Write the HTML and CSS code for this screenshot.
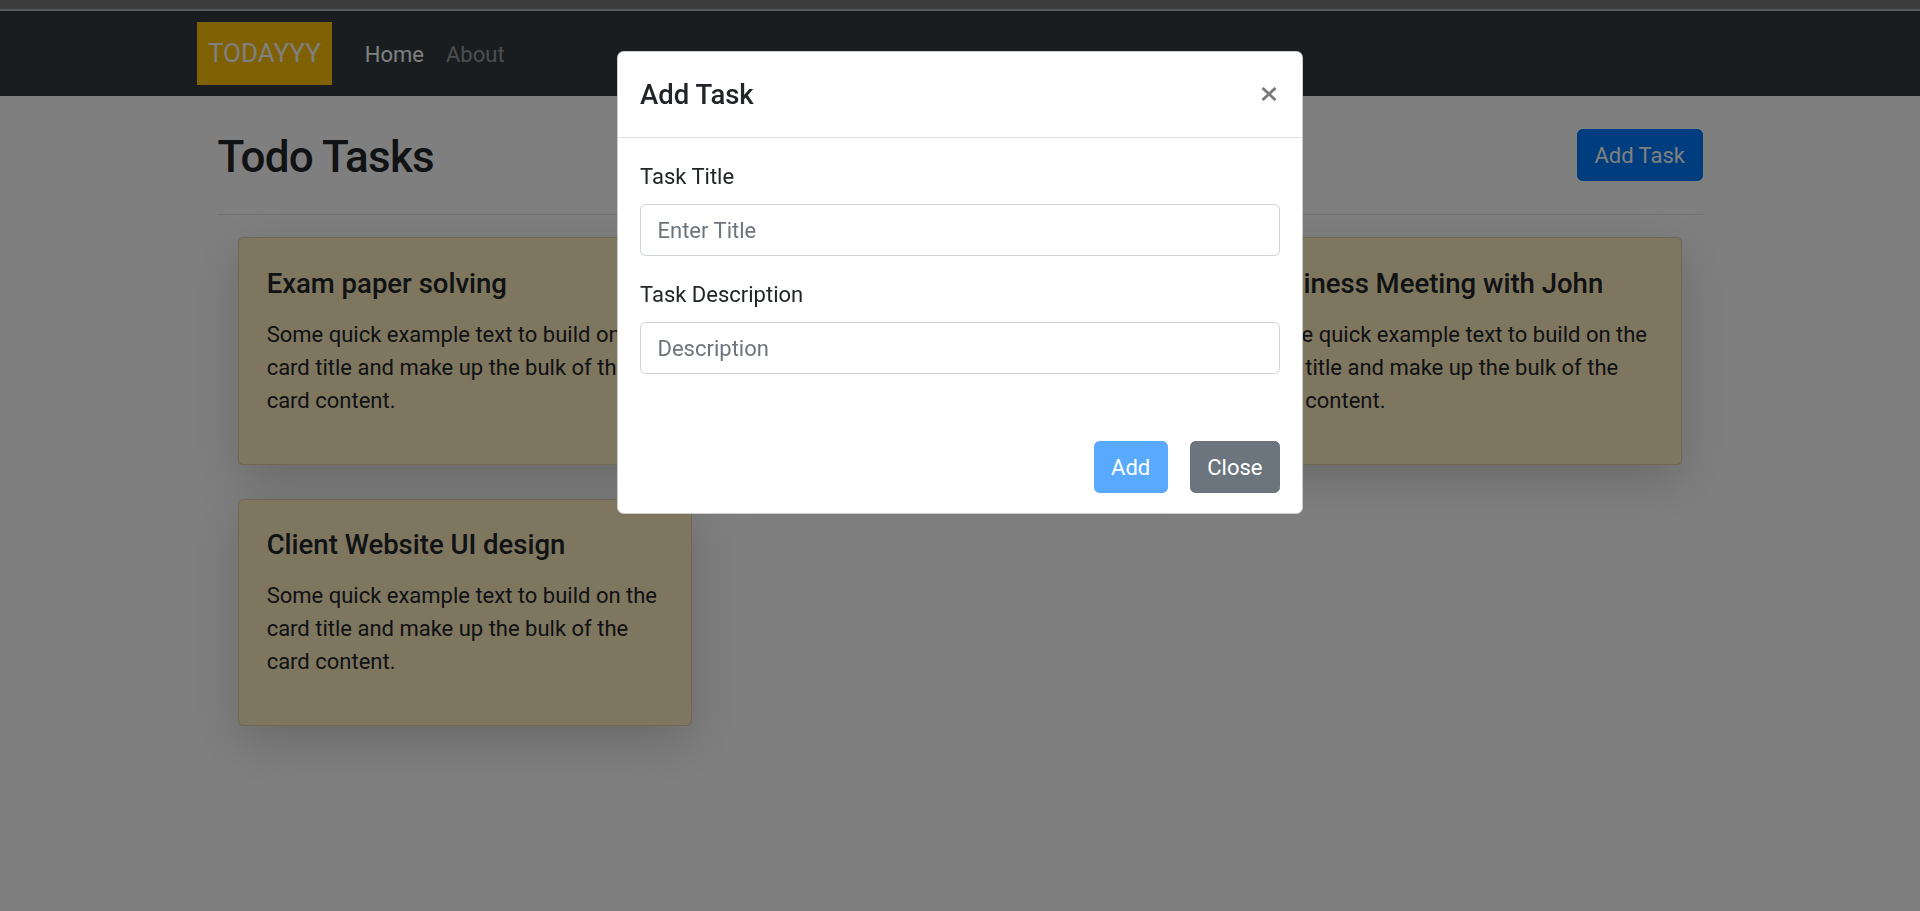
FILE: index.html
```html
<!DOCTYPE html>
<html lang="en">
<head>
<meta charset="utf-8">
<title>TODAYYY - Todo Tasks</title>
<link rel="stylesheet" href="styles.css">
</head>
<body>
<div class="topstrip"></div>
<nav class="navbar">
  <div class="nav-container">
    <a class="brand" href="#">TODAYYY</a>
    <ul class="nav-links">
      <li><a class="nav-link active" href="#">Home</a></li>
      <li><a class="nav-link" href="#">About</a></li>
    </ul>
  </div>
</nav>

<main class="main">
  <div class="page-head">
    <h2 class="page-title">Todo Tasks</h2>
    <button class="btn btn-primary" type="button">Add Task</button>
  </div>
  <hr class="divider">
  <div class="cards">
    <div class="card">
      <h5 class="card-title">Exam paper solving</h5>
      <p class="card-text">Some quick example text to build on the card title and make up the bulk of the card content.</p>
    </div>
    <div class="card">
      <h5 class="card-title">Grocery shopping</h5>
      <p class="card-text">Some quick example text to build on the card title and make up the bulk of the card content.</p>
    </div>
    <div class="card">
      <h5 class="card-title">Business Meeting with John</h5>
      <p class="card-text">Some quick example text to build on the card title and make up the bulk of the card content.</p>
    </div>
    <div class="card">
      <h5 class="card-title">Client Website UI design</h5>
      <p class="card-text">Some quick example text to build on the card title and make up the bulk of the card content.</p>
    </div>
  </div>
</main>

<div class="backdrop"></div>
<div class="modal">
  <div class="modal-dialog">
    <div class="modal-header">
      <h5 class="modal-title">Add Task</h5>
      <button class="close" type="button" aria-label="Close">
        <svg width="16" height="14" viewBox="0 0 16 14" aria-hidden="true">
          <path d="M1.5 1 L14.5 13 M14.5 1 L1.5 13" stroke="#7a7a7a" stroke-width="2.9" fill="none"/>
        </svg>
      </button>
    </div>
    <div class="modal-body">
      <div class="form-group">
        <label class="form-label" for="title">Task Title</label>
        <input class="form-control" id="title" type="text" placeholder="Enter Title">
      </div>
      <div class="form-group">
        <label class="form-label" for="desc">Task Description</label>
        <input class="form-control" id="desc" type="text" placeholder="Description">
      </div>
    </div>
    <div class="modal-footer">
      <button class="btn btn-primary btn-disabled" type="button">Add</button>
      <button class="btn btn-secondary" type="button">Close</button>
    </div>
  </div>
</div>
</body>
</html>
```

FILE: styles.css
```css
* { box-sizing: border-box; }

html, body {
  margin: 0;
  padding: 0;
}

html {
  background: #ffffff;
}

body {
  background: #ffffff;
  color: #212529;
  font-family: Roboto, "Liberation Sans", Arial, sans-serif;
  font-size: 22px;
  line-height: 1.5;
  min-height: 100vh;
}

.topstrip {
  height: 11px;
  background: #797979;
  border-bottom: 2px solid #b5b5b5;
}

/* Navbar */
.navbar {
  background: #343a40;
  padding: 11px 0;
}

.nav-container {
  width: 1567.5px;
  margin: 0 auto;
  padding: 0 20.625px;
  display: flex;
  align-items: center;
}

.brand {
  display: flex;
  align-items: center;
  height: 63px;
  padding: 0 11px;
  margin-right: 22px;
  background: #ffc107;
  color: #ffffff;
  font-size: 26px;
  text-decoration: none;
}

.nav-links {
  display: flex;
  list-style: none;
  margin: 0;
  padding: 0;
}

.nav-link {
  display: block;
  padding: 9px 11px 7px;
  font-size: 22px;
  color: rgba(255, 255, 255, 0.5);
  text-decoration: none;
}

.nav-link.active {
  color: #ffffff;
}

/* Main */
.main {
  width: 1485px;
  margin: 0 auto;
  padding-bottom: 120px;
}

.page-head {
  display: flex;
  justify-content: space-between;
  align-items: flex-start;
  margin-top: 33px;
}

.page-title {
  margin: 0;
  padding-top: 4px;
  font-size: 44px;
  font-weight: 500;
  line-height: 48px;
  letter-spacing: -0.8px;
}

.btn {
  display: inline-block;
  height: 52px;
  padding: 8.25px 16.5px;
  font-family: inherit;
  font-size: 22px;
  line-height: 1.5;
  border: 1px solid transparent;
  border-radius: 5.5px;
  color: #ffffff;
  cursor: pointer;
}

.btn-primary {
  background: #007bff;
  border-color: #007bff;
}

.btn-disabled {
  opacity: 0.65;
}

.btn-secondary {
  background: #6c757d;
  border-color: #6c757d;
}

.divider {
  margin: 33px 0 22px;
  border: 0;
  border-top: 1px solid rgba(0, 0, 0, 0.1);
}

.cards {
  display: grid;
  grid-template-columns: repeat(3, 1fr);
  column-gap: 41.25px;
  row-gap: 34px;
  margin: 0 20.625px;
  align-items: start;
}

.card {
  background: #feecc0;
  border: 1px solid rgba(0, 0, 0, 0.125);
  border-radius: 5.5px;
  padding: 28.5px 27.5px 27.5px;
  box-shadow: 0 16px 50px rgba(0, 0, 0, 0.18);
}

.card-title {
  margin: 0 0 18px;
  font-size: 27.5px;
  font-weight: 500;
  line-height: 1.2;
}

.card-text {
  margin: 0 0 19.5px;
}

/* Modal */
.backdrop {
  position: fixed;
  inset: 0;
  background: rgba(0, 0, 0, 0.5);
}

.modal {
  position: fixed;
  inset: 0;
}

.modal-dialog {
  width: 686px;
  margin: 51px auto 0;
  background: #ffffff;
  border: 1px solid rgba(0, 0, 0, 0.2);
  border-radius: 6.6px;
}

.modal-header {
  display: flex;
  justify-content: space-between;
  align-items: flex-start;
  padding: 22px;
  border-bottom: 1px solid #dee2e6;
}

.modal-title {
  margin: 0;
  font-size: 27.5px;
  font-weight: 500;
  line-height: 1.5;
}

.close {
  margin: 13px 3px 0 0;
  padding: 0;
  border: 0;
  background: transparent;
  display: flex;
  cursor: pointer;
}

.modal-body {
  padding: 22px;
}

.form-group {
  margin-bottom: 22px;
}

.form-label {
  display: block;
  margin-bottom: 11px;
}

.form-control {
  display: block;
  width: 100%;
  height: 52px;
  padding: 8.25px 16.5px;
  font-family: inherit;
  font-size: 22px;
  line-height: 1.5;
  color: #495057;
  background: #ffffff;
  border: 1px solid #ced4da;
  border-radius: 5.5px;
}

.form-control::placeholder {
  color: #6c757d;
}

.modal-footer {
  display: flex;
  justify-content: flex-end;
  gap: 22px;
  padding: 23px 22px 20px;
}
```
